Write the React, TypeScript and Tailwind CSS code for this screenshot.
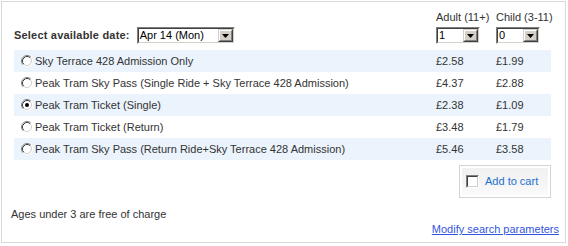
import React from 'react';

const rows = [
    { name: 'Sky Terrace 428 Admission Only', adult: '£2.58', child: '£1.99' },
    { name: 'Peak Tram Sky Pass (Single Ride + Sky Terrace 428 Admission)', adult: '£4.37', child: '£2.88' },
    { name: 'Peak Tram Ticket (Single)', adult: '£2.38', child: '£1.09', checked: true },
    { name: 'Peak Tram Ticket (Return)', adult: '£3.48', child: '£1.79' },
    { name: 'Peak Tram Sky Pass (Return Ride+Sky Terrace 428 Admission)', adult: '£5.46', child: '£3.58' },
];

function Select({ value, className }: { value: string; className: string }) {
    return (
        <div className={`flex h-[17px] border border-t-[#808080] border-l-[#808080] border-b-white border-r-white ${className}`}>
            <div className="flex flex-1 border border-t-[#404040] border-l-[#404040] border-b-[#d4d0c8] border-r-[#d4d0c8] bg-white">
                <span className="flex-1 pl-[1px] leading-[13px] text-black whitespace-nowrap overflow-hidden">{value}</span>
                <div className="w-[15px] h-[13px] border border-t-[#d4d0c8] border-l-[#d4d0c8] border-b-[#404040] border-r-[#404040]">
                    <div className="flex h-full items-center justify-center border border-t-white border-l-white border-b-[#808080] border-r-[#808080] bg-[#d4d0c8]">
                        <svg width="7" height="4" viewBox="0 0 7 4">
                            <path d="M0 0h7L3.5 4z" fill="#000" />
                        </svg>
                    </div>
                </div>
            </div>
        </div>
    );
}

function Radio({ checked }: { checked?: boolean }) {
    return (
        <svg width="12" height="12" viewBox="0 0 12 12" className="shrink-0">
            <circle cx="6" cy="6" r="5" fill="#fff" />
            <path d="M2.11 9.89A5.5 5.5 0 0 1 9.89 2.11" fill="none" stroke="#808080" />
            <path d="M9.89 2.11A5.5 5.5 0 0 1 2.11 9.89" fill="none" stroke="#fff" />
            <path d="M2.82 9.18A4.5 4.5 0 0 1 9.18 2.82" fill="none" stroke="#404040" />
            <path d="M9.18 2.82A4.5 4.5 0 0 1 2.82 9.18" fill="none" stroke="#d4d0c8" />
            {checked && <circle cx="6" cy="6" r="2" fill="#000" />}
        </svg>
    );
}

export default function App() {
    return (
        <div className="p-[1px] bg-white" style={{ fontFamily: '"Liberation Sans", Arial, sans-serif' }}>
            <div className="flex flex-col w-[565px] h-[242px] border border-[#d9d9d9] pl-[9px] pr-[6px] pt-[9px] text-[11px] text-[#333]">
                <div className="ml-[3px] w-[537px]">
                    {/* header */}
                    <div className="grid grid-cols-[422px_60px_55px] items-end">
                        <div className="flex items-center h-[17px] gap-[7px]">
                            <span className="font-bold leading-[13px] tracking-[0.2px]">Select available date:</span>
                            <Select value="Apr 14 (Mon)" className="w-[98px]" />
                        </div>
                        <div className="flex flex-col">
                            <span className="leading-[13px] mb-[3px] whitespace-nowrap">Adult (11+)</span>
                            <Select value="1" className="w-[44px]" />
                        </div>
                        <div className="flex flex-col">
                            <span className="leading-[13px] mb-[3px] whitespace-nowrap">Child (3-11)</span>
                            <Select value="0" className="w-[44px]" />
                        </div>
                    </div>

                    {/* products */}
                    <div className="mt-[6px] flex flex-col">
                        {rows.map((row, i) => (
                            <div
                                key={i}
                                className={`grid grid-cols-[422px_60px_55px] h-[22px] items-center ${i % 2 === 0 ? 'bg-[#ebf3fd]' : ''}`}
                            >
                                <div className="flex items-center pl-[7px] gap-[2px]">
                                    <Radio checked={row.checked} />
                                    <span className="whitespace-nowrap">{row.name}</span>
                                </div>
                                <span>{row.adult}</span>
                                <span>{row.child}</span>
                            </div>
                        ))}
                    </div>

                    <div className="flex justify-end mt-[5px]">
                        <div className="w-[92px] h-[33px] border border-[#d4d4d4] p-[2px] bg-white">
                            <div className="flex h-full items-center gap-[6px] pl-[4px] bg-gradient-to-b from-[#f1f1f1] via-[#f4f4f4] to-[#fbfbfb]">
                                <div className="w-[13px] h-[13px] border border-t-[#808080] border-l-[#808080] border-b-white border-r-white">
                                    <div className="h-full border border-t-[#404040] border-l-[#404040] border-b-[#d4d0c8] border-r-[#d4d0c8] bg-white" />
                                </div>
                                <span className="text-[#2470d0] leading-[13px]">Add to cart</span>
                            </div>
                        </div>
                    </div>
                </div>

                <div className="mt-[10px] leading-[13px]">Ages under 3 are free of charge</div>
                <div className="mt-[2px] flex justify-end leading-[13px]">
                    <a href="#" className="text-[#3355dd] underline">Modify search parameters</a>
                </div>
            </div>
        </div>
    );
}
